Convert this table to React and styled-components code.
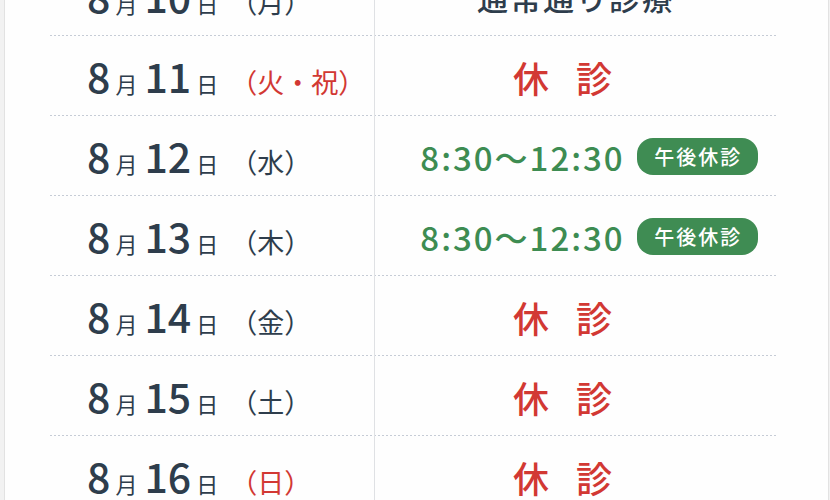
import styled, { createGlobalStyle } from "styled-components";

const GlobalStyle = createGlobalStyle`
  html, body {
    margin: 0;
    padding: 0;
    background: #f2f2f2;
    font-family: "Noto Sans CJK JP", "Noto Sans", sans-serif;
  }
`;

const Card = styled.div`
  width: 823px;
  height: 500px;
  margin-left: 4px;
  background: #fefefe;
  border-left: 1px solid #e2e2e2;
  border-right: 1px solid #e2e2e2;
  overflow: hidden;
`;

const Table = styled.div`
  display: flex;
  flex-direction: column;
  margin-top: -44px;
  padding-left: 45px;
`;

const Row = styled.div`
  display: grid;
  grid-template-columns: 324px 403px;
  height: 80px;
  background-image: repeating-linear-gradient(to right, #c6ccd6 0 2px, transparent 2px 4px);
  background-size: 727px 1px;
  background-position: left bottom;
  background-repeat: no-repeat;
`;

const DateCell = styled.div`
  display: flex;
  align-items: baseline;
  justify-content: flex-start;
  padding-left: 37px;
  padding-top: 19px;
  color: #2e3d4c;
`;

const Num = styled.span`
  font-size: 41px;
  font-weight: 500;
  line-height: 1;
`;

const Unit = styled.span`
  font-size: 22px;
  font-weight: 400;
  margin: 0 7px 0 5px;
`;

const Day = styled.span`
  font-size: 27px;
  font-weight: 400;
  margin-left: 5px;
  color: ${(p) => (p.$red ? "#d23833" : "#2e3d4c")};
`;

const StatusCell = styled.div`
  display: flex;
  align-items: center;
  justify-content: center;
  gap: 12px;
  border-left: 1px solid #dfe1e4;
  padding-left: ${(p) => (p.$shift ? "26px" : "0")};
  margin-bottom: -1px;
`;

const Normal = styled.span`
  font-size: 31px;
  font-weight: 500;
  letter-spacing: 2px;
  color: #2e3d4c;
`;

const Closed = styled.span`
  font-size: 36px;
  font-weight: 500;
  letter-spacing: 27px;
  color: #d23833;
`;

const Hours = styled.span`
  font-size: 33px;
  font-weight: 500;
  letter-spacing: 2px;
  color: #3d8c52;
`;

const Badge = styled.span`
  display: inline-flex;
  align-items: center;
  justify-content: center;
  width: 121px;
  height: 37px;
  border-radius: 16px;
  background: #3f8c53;
  color: #fff;
  font-size: 20px;
  font-weight: 500;
  letter-spacing: 2px;
  padding-left: 2px;
  box-sizing: border-box;
`;

const days = [
  { d: "10", w: "（月）", kind: "normal" },
  { d: "11", w: "（火・祝）", red: true, kind: "closed" },
  { d: "12", w: "（水）", kind: "half" },
  { d: "13", w: "（木）", kind: "half" },
  { d: "14", w: "（金）", kind: "closed" },
  { d: "15", w: "（土）", kind: "closed" },
  { d: "16", w: "（日）", red: true, kind: "closed" },
];

function Status({ kind }) {
  if (kind === "normal") return <Normal>通常通り診療</Normal>;
  if (kind === "closed") return <Closed>休診</Closed>;
  return (
    <>
      <Hours>8:30～12:30</Hours>
      <Badge>午後休診</Badge>
    </>
  );
}

export default function App() {
  return (
    <>
      <GlobalStyle />
      <Card>
        <Table>
          {days.map((row) => (
            <Row key={row.d}>
              <DateCell>
                <Num>8</Num>
                <Unit>月</Unit>
                <Num>{row.d}</Num>
                <Unit>日</Unit>
                <Day $red={row.red}>{row.w}</Day>
              </DateCell>
              <StatusCell $shift={row.kind === "half"}>
                <Status kind={row.kind} />
              </StatusCell>
            </Row>
          ))}
        </Table>
      </Card>
    </>
  );
}
